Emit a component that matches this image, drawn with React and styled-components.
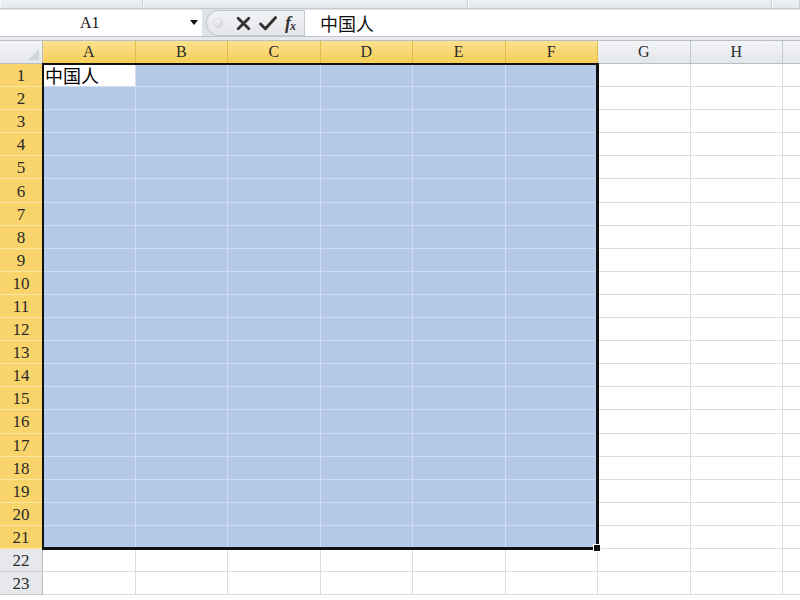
import React from "react";
import styled, { createGlobalStyle } from "styled-components";

const COLS = ["A", "B", "C", "D", "E", "F", "G", "H", ""];
const SEL_COLS = 6;
const SEL_ROWS = 21;
const ROWS = 23;
const ROW_H = 23.1;

const GlobalStyle = createGlobalStyle`
  html, body {
    margin: 0;
    padding: 0;
    background: #ffffff;
    overflow: hidden;
  }
  body {
    width: 800px;
    height: 600px;
    font-family: "Liberation Serif", "Noto Sans CJK SC", serif;
  }
`;

const Window = styled.div`
  width: 800px;
  height: 600px;
  overflow: hidden;
  display: flex;
  flex-direction: column;
  background: #fff;
`;

const RibbonEdge = styled.div`
  height: 8px;
  background: linear-gradient(#eef1f5, #e3e7ec);
  border-bottom: 1px solid #c3c9d1;
  display: grid;
  grid-template-columns: 143px 325px 304px 1fr;
`;

const RibbonPart = styled.div`
  border-right: 1px solid #cdd3da;
  border-left: 1px solid #f7f9fb;
`;

const FormulaBar = styled.div`
  height: 26px;
  padding: 1px 0 0 0;
  display: flex;
  align-items: stretch;
  background: #dfe3e8;
  border-bottom: 1px solid #c2c7ce;
`;

const NameBox = styled.div`
  width: 202px;
  background: #fff;
  display: flex;
  align-items: center;
  position: relative;
  font-family: "Liberation Serif", serif;
  font-size: 16px;
  color: #111;
  padding-left: 80px;
  box-sizing: border-box;
`;

const DropArrow = styled.span`
  position: absolute;
  right: 4px;
  top: 10px;
  width: 0;
  height: 0;
  border-left: 4px solid transparent;
  border-right: 4px solid transparent;
  border-top: 5px solid #111;
`;

const FxGroup = styled.div`
  width: 98px;
  margin-left: 4px;
  display: flex;
  align-items: center;
  gap: 8px;
  padding-left: 6px;
  box-sizing: border-box;
  background: linear-gradient(#f1f2f4, #e4e6ea);
  border: 1px solid #c4c9cf;
  border-right: none;
  border-radius: 13px 0 0 13px;
`;

const Grip = styled.span`
  width: 10px;
  height: 10px;
  border-radius: 50%;
  background: radial-gradient(circle at 40% 35%, #f4f5f6, #c6cacf);
  margin-right: 5px;
`;

const FxLabel = styled.span`
  font-family: "Liberation Serif", serif;
  font-style: italic;
  font-weight: bold;
  font-size: 18px;
  color: #333;
  letter-spacing: -1px;
  sub {
    font-size: 12px;
    vertical-align: -1px;
  }
`;

const FormulaInput = styled.div`
  flex: 1;
  background: #fff;
  border-left: 1px solid #c4c9cf;
  display: flex;
  align-items: center;
  padding-left: 15px;
  font-family: "Noto Sans CJK SC", sans-serif;
  font-size: 18px;
  color: #111;
`;

const Gap = styled.div`
  height: 3px;
  background: #e6e9ed;
  border-bottom: 1px solid #b9bec5;
`;

const SheetArea = styled.div`
  position: relative;
  display: grid;
  grid-template-columns: 43px repeat(${COLS.length}, 92.5px);
  grid-template-rows: 23px;
  grid-auto-rows: ${ROW_H}px;
`;

const Corner = styled.div`
  background: linear-gradient(#f3f4f6, #e4e6e9);
  border-right: 1px solid #b9bec5;
  border-bottom: 1px solid #b9bec5;
  box-sizing: border-box;
  position: relative;
  &::after {
    content: "";
    position: absolute;
    right: 3px;
    bottom: 3px;
    border-left: 11px solid transparent;
    border-bottom: 11px solid #d2d5da;
  }
`;

const ColHead = styled.div`
  box-sizing: border-box;
  display: flex;
  align-items: center;
  justify-content: center;
  font-family: "Liberation Serif", serif;
  font-size: 16px;
  color: #2a2a2a;
  background: ${(p) =>
    p.$on
      ? "linear-gradient(#fbe18f, #f6cf58)"
      : "linear-gradient(#f4f5f7, #e3e6ea)"};
  border-right: 1px solid ${(p) => (p.$on ? "#e3b94c" : "#c5c9cf")};
  border-bottom: 1px solid ${(p) => (p.$on ? "#c29a3a" : "#b9bec5")};
`;

const RowHead = styled.div`
  box-sizing: border-box;
  display: flex;
  align-items: center;
  justify-content: center;
  font-family: "Liberation Serif", serif;
  font-size: 17px;
  color: #2a2a2a;
  padding-top: 2px;
  background: ${(p) => (p.$on ? "#f8d46a" : "#e6e8ec")};
  border-right: 1px solid ${(p) => (p.$on ? "#d7ab3e" : "#b9bec5")};
  border-bottom: 1px solid ${(p) => (p.$on ? "#fbe6a6" : "#c9cdd2")};
`;

const Cell = styled.div`
  box-sizing: border-box;
  background: ${(p) => (p.$active ? "#ffffff" : p.$sel ? "#b5c9e9" : "#ffffff")};
  border-right: 1px solid ${(p) => (p.$sel ? "#d2ddef" : "#dadcde")};
  border-bottom: 1px solid ${(p) => (p.$sel ? "#d2ddef" : "#dadcde")};
  font-family: "Noto Sans CJK SC", sans-serif;
  font-size: 18px;
  line-height: 22px;
  padding-left: 2px;
  color: #000;
  white-space: nowrap;
`;

const Selection = styled.div`
  position: absolute;
  left: 42px;
  top: 22px;
  width: ${92.5 * SEL_COLS + 2}px;
  height: ${ROW_H * SEL_ROWS + 2}px;
  border: 3px solid #111;
  border-top-width: 2px;
  border-left-width: 2px;
  box-sizing: border-box;
  pointer-events: none;
`;

const FillHandle = styled.span`
  position: absolute;
  right: -5px;
  bottom: -5px;
  width: 6px;
  height: 6px;
  background: #111;
  border: 1px solid #fff;
`;

function Cross() {
  return (
    <svg width="15" height="15" viewBox="0 0 14 14">
      <path d="M2 2 L12 12 M12 2 L2 12" stroke="#333" strokeWidth="2.6" strokeLinecap="round" />
    </svg>
  );
}

function Check() {
  return (
    <svg width="18" height="15" viewBox="0 0 17 14">
      <path d="M1.5 7.5 L6 12 L15.5 1.5" stroke="#333" strokeWidth="2.8" fill="none" strokeLinejoin="round" strokeLinecap="round" />
    </svg>
  );
}

export default function App() {
  const rows = [];
  for (let r = 1; r <= ROWS; r++) {
    const inSel = r <= SEL_ROWS;
    rows.push(
      <RowHead key={"h" + r} $on={inSel}>
        {r}
      </RowHead>
    );
    COLS.forEach((c, i) => {
      const sel = inSel && i < SEL_COLS;
      const active = r === 1 && i === 0;
      rows.push(
        <Cell key={i + "-" + r} $sel={sel} $active={active}>
          {active ? "中国人" : ""}
        </Cell>
      );
    });
  }

  return (
    <Window>
      <GlobalStyle />
      <RibbonEdge>
        <RibbonPart />
        <RibbonPart />
        <RibbonPart />
        <RibbonPart />
      </RibbonEdge>
      <FormulaBar>
        <NameBox>
          A1
          <DropArrow />
        </NameBox>
        <FxGroup>
          <Grip />
          <Cross />
          <Check />
          <FxLabel>
            f<sub>x</sub>
          </FxLabel>
        </FxGroup>
        <FormulaInput>中国人</FormulaInput>
      </FormulaBar>
      <Gap />
      <SheetArea>
        <Corner />
        {COLS.map((c, i) => (
          <ColHead key={"c" + i} $on={i < SEL_COLS}>
            {c}
          </ColHead>
        ))}
        {rows}
        <Selection>
          <FillHandle />
        </Selection>
      </SheetArea>
    </Window>
  );
}
